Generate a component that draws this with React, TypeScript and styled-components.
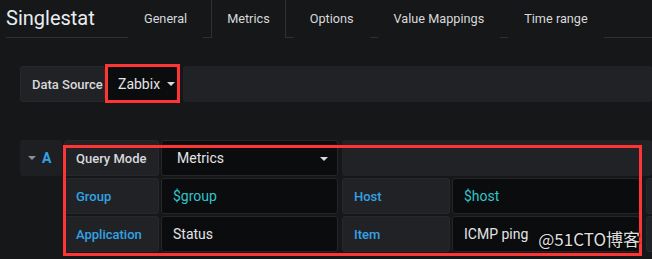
import styled, { createGlobalStyle } from "styled-components";

/*
 * Singlestat panel editor, Metrics tab, with the Zabbix query rows.
 * The red frames and the watermark are annotations drawn over the form.
 */

const GlobalStyle = createGlobalStyle`
  html, body {
    margin: 0;
    padding: 0;
    background: #161719;
  }
  body {
    font-family: Roboto, "Liberation Sans", Arial, sans-serif;
    color: #d8d9da;
    width: 652px;
    height: 259px;
    overflow: hidden;
  }
`;

const tabs = ["General", "Metrics", "Options", "Value Mappings", "Time range"];

function Caret({ size = 8 }: { size?: number }) {
  return (
    <svg width={size} height={size / 2} viewBox="0 0 8 4" aria-hidden>
      <path d="M0 0 L8 0 L4 4 Z" fill="currentColor" />
    </svg>
  );
}

export default function App() {
  return (
    <Page>
      <GlobalStyle />
      <Header>
        <Title>Singlestat</Title>
        {tabs.map((t) => (
          <Tab key={t} $active={t === "Metrics"}>
            {t}
          </Tab>
        ))}
      </Header>

      <Body>
        <FormRow>
          <Label $width={85}>Data Source</Label>
          <Annotated>
            <Select $width={71} $pad={10}>
              Zabbix
              <SelectCaret>
                <Caret />
              </SelectCaret>
            </Select>
            <Frame $inset="-2px -2px -1px -2px" />
          </Annotated>
          <Grow $gap={5} />
        </FormRow>

        <QueryBlock>
          <QueryHeader>
            <CollapseCaret>
              <Caret />
            </CollapseCaret>
            <RefId>A</RefId>
          </QueryHeader>

          <QueryRows>
            <FormRow>
              <Label $width={95}>Query Mode</Label>
              <Select $width={177} $pad={15} $gap={2}>
                Metrics
                <SelectCaret $right={9}>
                  <Caret />
                </SelectCaret>
              </Select>
              <Grow $gap={4} />
            </FormRow>
            <FormRow>
              <Label $width={95} $accent>Group</Label>
              <Input $width={177} $variable>$group</Input>
              <Label $width={108} $accent $gap={4}>Host</Label>
              <Input $width={188} $variable>$host</Input>
              <Label $gap={6} />
            </FormRow>
            <FormRow>
              <Label $width={95} $accent>Application</Label>
              <Input $width={177}>Status</Input>
              <Label $width={108} $accent $gap={4}>Item</Label>
              <Input $width={188}>ICMP ping</Input>
              <Label $gap={6} />
            </FormRow>
            <Frame $inset="5px 10px -4px -1px" />
          </QueryRows>
        </QueryBlock>
      </Body>

      <Watermark>@51CTO博客</Watermark>
    </Page>
  );
}

const Page = styled.div`
  position: relative;
  width: 652px;
  height: 259px;
  overflow: hidden;
`;

const Header = styled.div`
  display: flex;
  align-items: stretch;
  height: 37px;
  margin-left: 6px;
  border-bottom: 1px solid #2f3033;
`;

const Title = styled.div`
  flex: none;
  width: 122px;
  font-size: 20px;
  line-height: 37px;
  color: #e9edf2;
`;

const Tab = styled.div<{ $active?: boolean }>`
  flex: none;
  margin-right: 8px;
  padding: 0 15px;
  font-size: 12.7px;
  line-height: 37px;
  color: #d8d9da;
  border-left: 1px solid ${(p) => (p.$active ? "#2f3033" : "transparent")};
  border-right: 1px solid ${(p) => (p.$active ? "#2f3033" : "transparent")};
  background: #161719;
  height: 38px;
  margin-bottom: ${(p) => (p.$active ? "-1px" : "0")};
  position: relative;
`;

const Body = styled.div`
  display: flex;
  flex-direction: column;
  padding: 28px 0 0 20px;
`;

const FormRow = styled.div`
  display: flex;
  align-items: stretch;
  height: 36px;
`;

const Label = styled.div<{ $width?: number; $accent?: boolean; $gap?: number }>`
  display: flex;
  align-items: center;
  box-sizing: border-box;
  flex: ${(p) => (p.$width ? "none" : "1 1 auto")};
  width: ${(p) => (p.$width ? `${p.$width}px` : "auto")};
  min-width: 0;
  margin-left: ${(p) => p.$gap ?? 0}px;
  padding: 0 11px;
  font-size: 13px;
  font-weight: 500;
  white-space: nowrap;
  color: ${(p) => (p.$accent ? "#33a2e5" : "#d8d9da")};
  background: #212226;
  border: 1px solid #27282c;
  border-radius: 3px;
`;

const Grow = styled.div<{ $gap?: number }>`
  flex: 1 1 auto;
  margin-left: ${(p) => p.$gap ?? 0}px;
  background: #212226;
  border-radius: 3px;
`;

const Annotated = styled.div`
  position: relative;
  display: flex;
  margin-left: 2px;
`;

const Select = styled.div<{ $width: number; $pad: number; $gap?: number }>`
  position: relative;
  display: flex;
  align-items: center;
  box-sizing: border-box;
  flex: none;
  width: ${(p) => p.$width}px;
  margin-left: ${(p) => p.$gap ?? 0}px;
  padding-left: ${(p) => p.$pad}px;
  font-size: 14px;
  color: #e3e4e6;
  background: #0b0c0e;
  border: 1px solid #262628;
  border-radius: 3px;
`;

const SelectCaret = styled.span<{ $right?: number }>`
  display: flex;
  margin-left: 7px;
  color: #d8d9da;
  ${(p) => (p.$right !== undefined ? `position: absolute; right: ${p.$right}px; top: 16px;` : "")}
`;

const Input = styled.div<{ $width: number; $variable?: boolean }>`
  display: flex;
  align-items: center;
  box-sizing: border-box;
  flex: none;
  width: ${(p) => p.$width}px;
  margin-left: 2px;
  padding-left: 11px;
  font-size: 14px;
  color: ${(p) => (p.$variable ? "#31c4c9" : "#e3e4e6")};
  background: #0b0c0e;
  border: 1px solid #262628;
  border-radius: 3px;
`;

const QueryBlock = styled.div`
  display: flex;
  align-items: flex-start;
  margin-top: 38px;
`;

const QueryHeader = styled.div`
  display: flex;
  align-items: center;
  flex: none;
  box-sizing: border-box;
  width: 42px;
  height: 36px;
  padding-left: 8px;
  gap: 6px;
  background: #1e1f23;
  border-radius: 3px;
`;

const CollapseCaret = styled.span`
  display: flex;
  color: #8e8f92;
`;

const RefId = styled.span`
  font-size: 14px;
  font-weight: 700;
  color: #33a2e5;
`;

const QueryRows = styled.div`
  position: relative;
  display: flex;
  flex-direction: column;
  gap: 2px;
  flex: 1 1 auto;
  min-width: 0;
  margin-left: 2px;
`;

const Frame = styled.div<{ $inset: string }>`
  position: absolute;
  inset: ${(p) => p.$inset};
  border: 3px solid #ff3535;
  pointer-events: none;
`;

const Watermark = styled.div`
  position: absolute;
  right: 12px;
  bottom: 8px;
  font-family: "Noto Sans CJK SC", "Liberation Sans", sans-serif;
  font-size: 17px;
  color: rgba(255, 255, 255, 0.88);
  text-shadow: 0 0 2px rgba(0, 0, 0, 0.9), 1px 1px 1px rgba(0, 0, 0, 0.8);
`;
